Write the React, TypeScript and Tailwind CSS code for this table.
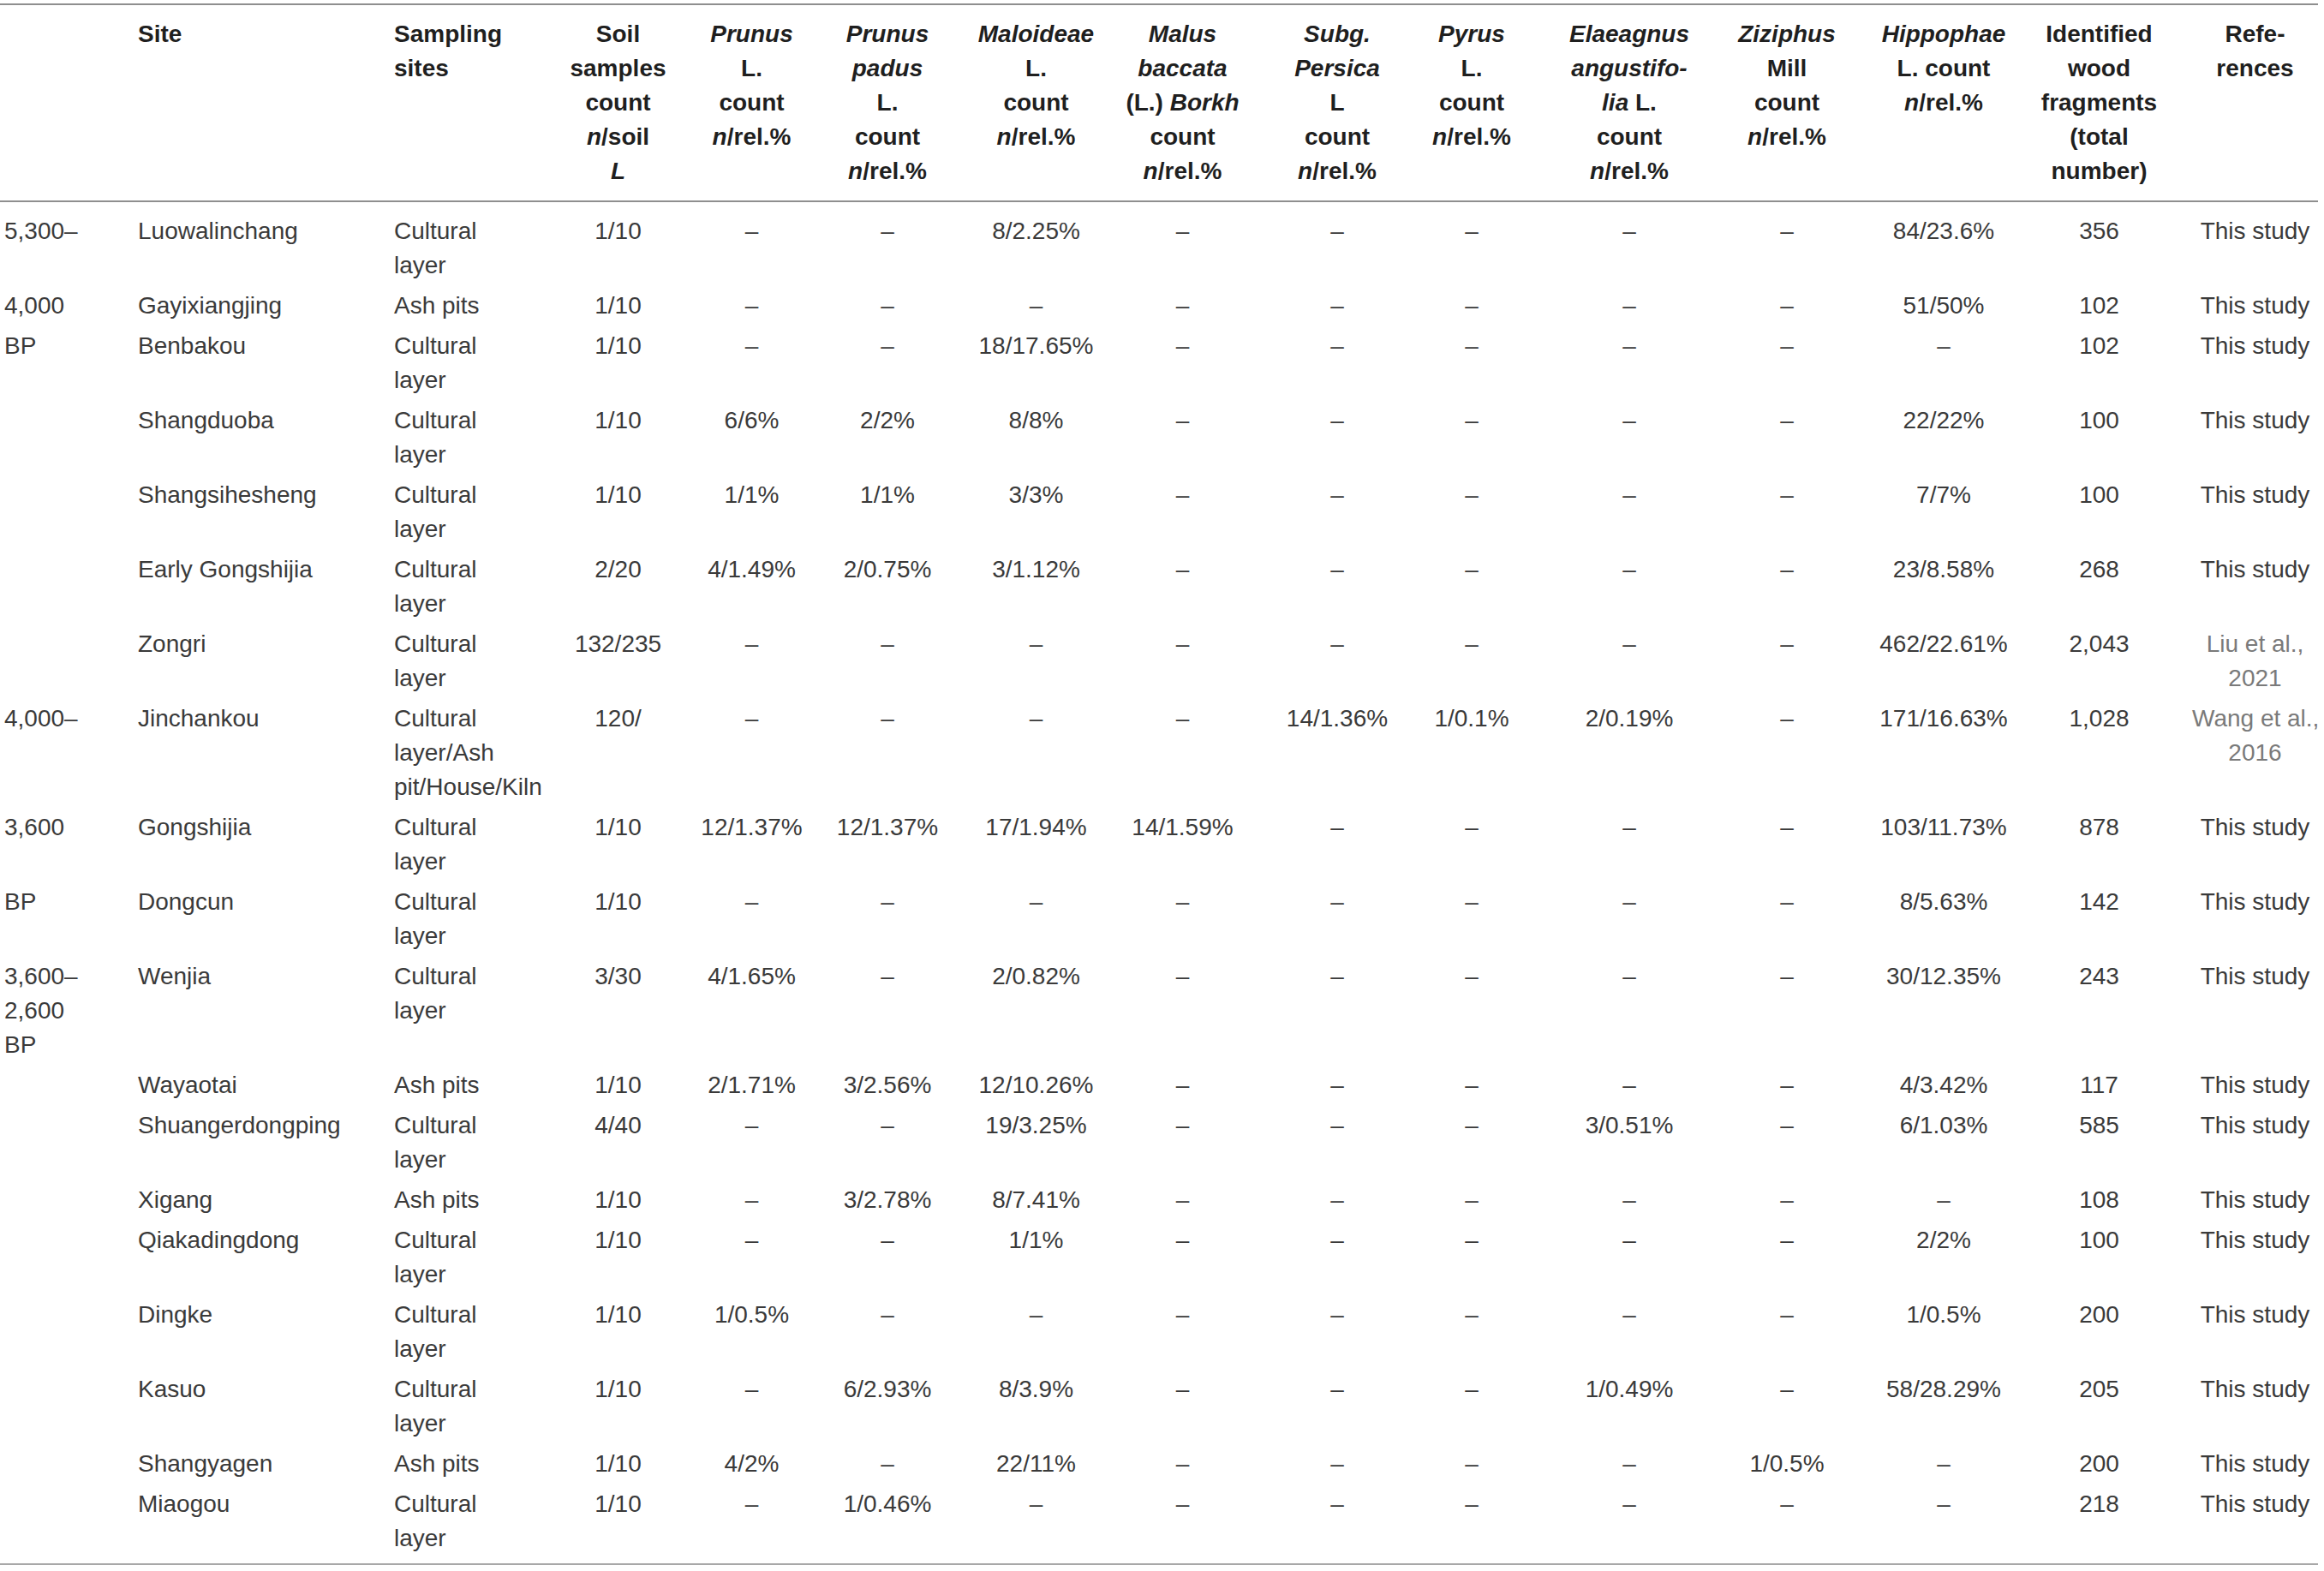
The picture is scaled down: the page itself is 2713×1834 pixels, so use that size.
import React from 'react';

const D = '–';
const CL = 'Cultural\nlayer';
const AP = 'Ash pits';
const TS = 'This study';

type Row = string[];

// period, site, sampling, soil, prunus, padus, maloideae, malus, persica, pyrus, elaeagnus, ziziphus, hippophae, identified, refs
const rows: Row[] = [
  ['5,300–', 'Luowalinchang', CL, '1/10', D, D, '8/2.25%', D, D, D, D, D, '84/23.6%', '356', TS],
  ['4,000', 'Gayixiangjing', AP, '1/10', D, D, D, D, D, D, D, D, '51/50%', '102', TS],
  ['BP', 'Benbakou', CL, '1/10', D, D, '18/17.65%', D, D, D, D, D, D, '102', TS],
  ['', 'Shangduoba', CL, '1/10', '6/6%', '2/2%', '8/8%', D, D, D, D, D, '22/22%', '100', TS],
  ['', 'Shangsihesheng', CL, '1/10', '1/1%', '1/1%', '3/3%', D, D, D, D, D, '7/7%', '100', TS],
  ['', 'Early Gongshijia', CL, '2/20', '4/1.49%', '2/0.75%', '3/1.12%', D, D, D, D, D, '23/8.58%', '268', TS],
  ['', 'Zongri', CL, '132/235', D, D, D, D, D, D, D, D, '462/22.61%', '2,043', 'Liu et al.,\n2021'],
  ['4,000–', 'Jinchankou', 'Cultural\nlayer/Ash\npit/House/Kiln', '120/', D, D, D, D, '14/1.36%', '1/0.1%', '2/0.19%', D, '171/16.63%', '1,028', 'Wang et al.,\n2016'],
  ['3,600', 'Gongshijia', CL, '1/10', '12/1.37%', '12/1.37%', '17/1.94%', '14/1.59%', D, D, D, D, '103/11.73%', '878', TS],
  ['BP', 'Dongcun', CL, '1/10', D, D, D, D, D, D, D, D, '8/5.63%', '142', TS],
  ['3,600–\n2,600\nBP', 'Wenjia', CL, '3/30', '4/1.65%', D, '2/0.82%', D, D, D, D, D, '30/12.35%', '243', TS],
  ['', 'Wayaotai', AP, '1/10', '2/1.71%', '3/2.56%', '12/10.26%', D, D, D, D, D, '4/3.42%', '117', TS],
  ['', 'Shuangerdongping', CL, '4/40', D, D, '19/3.25%', D, D, D, '3/0.51%', D, '6/1.03%', '585', TS],
  ['', 'Xigang', AP, '1/10', D, '3/2.78%', '8/7.41%', D, D, D, D, D, D, '108', TS],
  ['', 'Qiakadingdong', CL, '1/10', D, D, '1/1%', D, D, D, D, D, '2/2%', '100', TS],
  ['', 'Dingke', CL, '1/10', '1/0.5%', D, D, D, D, D, D, D, '1/0.5%', '200', TS],
  ['', 'Kasuo', CL, '1/10', D, '6/2.93%', '8/3.9%', D, D, D, '1/0.49%', D, '58/28.29%', '205', TS],
  ['', 'Shangyagen', AP, '1/10', '4/2%', D, '22/11%', D, D, D, D, '1/0.5%', D, '200', TS],
  ['', 'Miaogou', CL, '1/10', D, '1/0.46%', D, D, D, D, D, D, D, '218', TS],
];

const widths = [156, 299, 190, 153, 159, 167, 171, 175, 170, 170, 184, 184, 182, 181, 165];

// per-column horizontal padding / alignment
const colCls = [
  'text-left pl-[5px]',
  'text-left pl-[5px]',
  'text-left pl-[5px]',
  'text-center',
  'text-center',
  'text-center pr-[9px]',
  'text-center',
  'text-center pr-[4px]',
  'text-center pl-[12px]',
  'text-center pr-[14px]',
  'text-center',
  'text-center',
  'text-center',
  'text-center',
  'text-center pl-[18px]',
];

const rel = (
  <>
    <i>n</i>/rel.%
  </>
);

const headers: React.ReactNode[] = [
  '',
  'Site',
  <>Sampling<br />sites</>,
  <>Soil<br />samples<br />count<br /><i>n</i>/soil<br /><i>L</i></>,
  <><i>Prunus</i><br />L.<br />count<br />{rel}</>,
  <><i>Prunus</i><br /><i>padus</i><br />L.<br />count<br />{rel}</>,
  <><i>Maloideae</i><br />L.<br />count<br />{rel}</>,
  <><i>Malus</i><br /><i>baccata</i><br />(L.) <i>Borkh</i><br />count<br />{rel}</>,
  <><i>Subg.</i><br /><i>Persica</i><br />L<br />count<br />{rel}</>,
  <><i>Pyrus</i><br />L.<br />count<br />{rel}</>,
  <><i>Elaeagnus</i><br /><i>angustifo-</i><br /><i>lia</i> L.<br />count<br />{rel}</>,
  <><i>Ziziphus</i><br />Mill<br />count<br />{rel}</>,
  <><i>Hippophae</i><br />L. count<br />{rel}</>,
  <>Identified<br />wood<br />fragments<br />(total<br />number)</>,
  <>Refe-<br />rences</>,
];

export default function App() {
  return (
    <div className="min-h-screen w-full bg-white pt-[4px] font-['Liberation_Sans',Arial,sans-serif] text-[28px] leading-[40px] text-[#3a3a3a]">
      <table className="w-[2706px] table-fixed border-collapse">
        <colgroup>
          {widths.map((w, i) => (
            <col key={i} style={{ width: w }} />
          ))}
        </colgroup>
        <thead>
          <tr className="border-t-2 border-b-2 border-[#8f8f8f]">
            {headers.map((h, i) => (
              <th
                key={i}
                className={`${colCls[i]} whitespace-nowrap pt-[14px] pb-[14px] align-top font-bold text-[#1f1f1f]`}
              >
                {h}
              </th>
            ))}
          </tr>
        </thead>
        <tbody className="border-b-2 border-[#a8a8a8]">
          {rows.map((r, ri) => {
            const first = ri === 0;
            const last = ri === rows.length - 1;
            const py = first ? 'pt-[14px] pb-[3.5px]' : last ? 'pt-[3.5px] pb-[9px]' : 'py-[3.5px]';
            return (
              <tr key={ri}>
                {r.map((c, ci) => (
                  <td
                    key={ci}
                    className={`${colCls[ci]} ${py} whitespace-pre align-top font-normal ${
                      ci === 14 && c !== TS ? 'text-[#7a7a7a]' : ''
                    }`}
                  >
                    {c}
                  </td>
                ))}
              </tr>
            );
          })}
        </tbody>
      </table>
    </div>
  );
}
